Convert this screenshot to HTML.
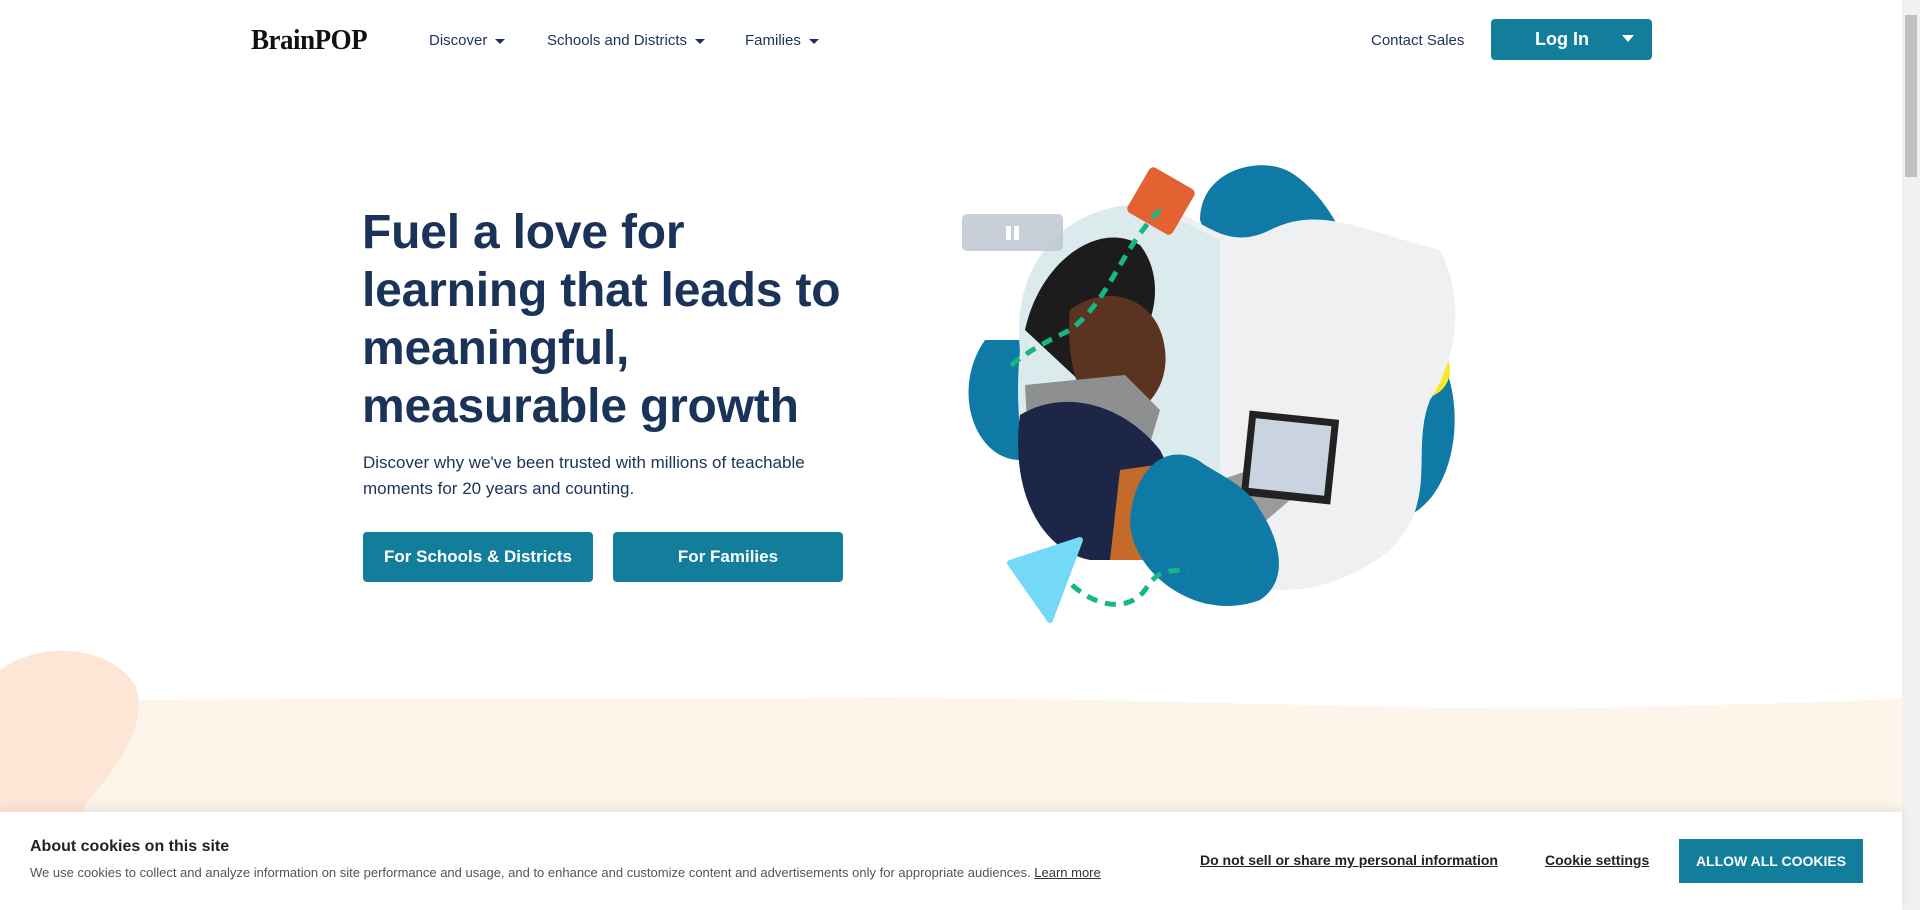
<!DOCTYPE html>
<html><head><meta charset="utf-8"><style>
*{margin:0;padding:0;box-sizing:border-box}
body{width:1920px;height:910px;overflow:hidden;background:#fff;font-family:"Liberation Sans",sans-serif;position:relative;color:#1b3358}
.a{position:absolute}
.nav{font-size:15px;color:#1b3358;top:32px}
.nav i{display:inline-block;width:0;height:0;border-left:5px solid transparent;border-right:5px solid transparent;border-top:5px solid #1b3358;margin-left:8px;vertical-align:middle}
h1{position:absolute;left:362px;top:204px;font-size:48px;line-height:58px;font-weight:700;color:#1b3358;letter-spacing:-0.2px}
.btn{position:absolute;background:#137e9b;color:#fff;font-weight:700;font-size:17px;border-radius:4px;display:flex;align-items:center;justify-content:center}
.ck a{color:#222;text-decoration:underline}
</style></head><body>
<div class="a" style="left:251px;top:24px;font-family:'Liberation Serif',serif;font-weight:700;font-size:29px;color:#111;letter-spacing:-0.5px;transform:scaleX(.93);transform-origin:left">BrainPOP</div>
<div class="a nav" style="left:429px">Discover<i></i></div>
<div class="a nav" style="left:547px">Schools and Districts<i></i></div>
<div class="a nav" style="left:745px">Families<i></i></div>
<div class="a nav" style="left:1371px">Contact Sales</div>
<div class="btn" style="left:1491px;top:19px;width:161px;height:41px;font-size:18px;justify-content:flex-start;padding-left:44px">Log In<span class="a" style="right:18px;top:16px;border-left:6px solid transparent;border-right:6px solid transparent;border-top:7px solid #fff"></span></div>

<h1>Fuel a love for<br>learning that leads to<br>meaningful,<br>measurable growth</h1>
<div class="a" style="left:363px;top:450px;font-size:17px;line-height:26px;color:#1b3358">Discover why we've been trusted with millions of teachable<br>moments for 20 years and counting.</div>
<div class="btn" style="left:363px;top:532px;width:230px;height:50px">For Schools &amp; Districts</div>
<div class="btn" style="left:613px;top:532px;width:230px;height:50px">For Families</div>

<svg class="a" style="left:0;top:640px" width="1905" height="180">
<path d="M0 65 C200 55 500 60 800 58 C1100 55 1400 72 1600 68 C1750 64 1850 62 1905 58 L1905 180 L0 180Z" fill="#fdf5ea"/>
<path d="M0 30 C40 0 110 5 135 45 C150 85 115 130 85 165 L80 180 L0 180Z" fill="#fde6d5"/>
</svg>

<svg class="a" style="left:960px;top:160px" width="540" height="480" viewBox="0 0 540 480">
<path d="M240 60 C240 10 300 -5 330 12 C360 30 385 70 395 110 L260 110Z" fill="#0f7aa6"/>
<path d="M25 180 C-10 230 15 300 60 300 L120 180Z" fill="#0f7aa6"/>
<path d="M470 180 C510 230 500 330 450 355 L390 260Z" fill="#0f7aa6"/>
<circle cx="462" cy="210" r="28" fill="#f7e82a"/>
<path d="M60 190 C50 90 120 40 190 45 C240 50 260 95 310 70 C360 45 400 70 480 90 C510 150 490 210 470 240 C450 290 480 340 430 390 C380 430 320 440 270 420 C220 410 180 390 130 380 C80 370 50 300 60 190Z" fill="#eef0f1"/>
<path d="M60 190 C50 90 120 40 190 45 L260 80 L260 380 L130 380 C80 370 50 300 60 190Z" fill="#cfe6ea" opacity=".6"/>
<path d="M65 170 C80 100 140 60 180 85 C200 110 200 150 180 180 L140 240 Z" fill="#1c1c1c"/>
<path d="M110 150 C150 120 200 140 205 190 C210 230 180 260 150 260 C120 255 105 200 110 150Z" fill="#5a3420"/>
<path d="M65 225 L165 215 L200 250 L185 300 L70 320Z" fill="#8e8f91"/>
<path d="M60 255 C100 230 160 240 200 290 L240 370 L260 400 L130 400 C80 390 50 330 60 255Z" fill="#1d2647"/>
<path d="M160 310 L230 300 L260 400 L150 400Z" fill="#c46b2b"/>
<path d="M230 330 L320 300 L330 340 L260 400 Z" fill="#9a9b9d"/>
<rect x="285" y="255" width="90" height="85" fill="#222" transform="rotate(6 330 297)"/>
<rect x="292" y="262" width="76" height="70" fill="#c9d4e0" transform="rotate(6 330 297)"/>
<path d="M170 360 C175 300 215 280 245 305 C270 320 290 330 300 350 C320 380 330 420 300 440 C260 455 220 440 195 415 C180 400 170 380 170 360Z" fill="#0f7aa6"/>
<rect x="175" y="15" width="52" height="52" rx="5" fill="#e46132" transform="rotate(30 201 41)"/>
<path d="M50 403 L120 380 L90 460Z" fill="#73d9f7" stroke="#73d9f7" stroke-width="6" stroke-linejoin="round"/>
<path d="M200 50 C160 90 150 140 110 170 C80 185 70 190 45 210" fill="none" stroke="#15b784" stroke-width="5" stroke-dasharray="11 8"/>
<path d="M112 425 C140 450 170 450 185 430 C195 415 200 410 228 410" fill="none" stroke="#15b784" stroke-width="5" stroke-dasharray="11 8"/>
</svg>
<div class="a" style="left:962px;top:214px;width:101px;height:37px;background:rgba(190,199,210,.85);border-radius:5px"><span class="a" style="left:44px;top:12px;width:5px;height:14px;background:#fff"></span><span class="a" style="left:52px;top:12px;width:5px;height:14px;background:#fff"></span></div>

<div class="a" style="left:1902px;top:0;width:18px;height:910px;background:#f1f1f1"><div class="a" style="left:3px;top:15px;width:12px;height:162px;background:#c1c1c1"></div></div>

<div class="a ck" style="left:0;top:812px;width:1902px;height:98px;background:#fff;box-shadow:0 -4px 10px rgba(0,0,0,.08)">
<div class="a" style="left:30px;top:26px;font-size:16px;font-weight:700;color:#222">About cookies on this site</div>
<div class="a" style="left:30px;top:53px;font-size:13px;color:#555">We use cookies to collect and analyze information on site performance and usage, and to enhance and customize content and advertisements only for appropriate audiences. <a style="color:#333">Learn more</a></div>
<div class="a" style="left:1200px;top:40px;font-size:14px;font-weight:700"><a>Do not sell or share my personal information</a></div>
<div class="a" style="left:1545px;top:40px;font-size:14px;font-weight:700"><a>Cookie settings</a></div>
<div class="btn" style="left:1679px;top:27px;width:184px;height:44px;font-size:14px;border-radius:0">ALLOW ALL COOKIES</div>
</div>
</body></html>
